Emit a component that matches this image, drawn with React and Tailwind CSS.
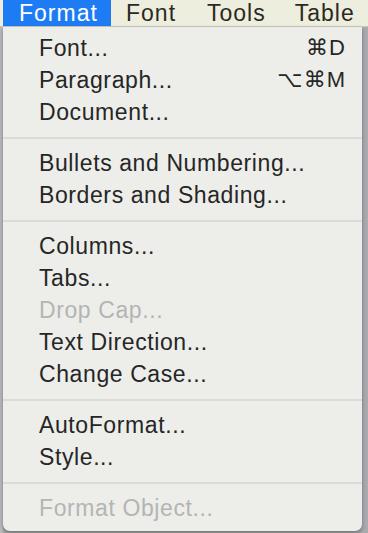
import React from "react";

const sections = [
  [
    { label: "Font...", shortcut: "⌘D" },
    { label: "Paragraph...", shortcut: "⌥⌘M" },
    { label: "Document..." },
  ],
  [{ label: "Bullets and Numbering..." }, { label: "Borders and Shading..." }],
  [
    { label: "Columns..." },
    { label: "Tabs..." },
    { label: "Drop Cap...", disabled: true },
    { label: "Text Direction..." },
    { label: "Change Case..." },
  ],
  [{ label: "AutoFormat..." }, { label: "Style..." }],
  [{ label: "Format Object...", disabled: true }],
];

const MenuItem = ({ label, shortcut, disabled }) => (
  <div
    className={`flex items-center justify-between h-[32px] pl-[36px] pr-[16px] ${
      disabled ? "text-[#b4b5b3]" : "text-[#262626]"
    }`}
  >
    <span className="tracking-[0.6px]">{label}</span>
    {shortcut && (
      <span className="text-[22px] font-['Liberation_Sans','DejaVu_Sans',sans-serif] tracking-[1px]">
        {shortcut}
      </span>
    )}
  </div>
);

const App = () => {
  return (
    <div className="w-[368px] h-[533px] bg-[#a9abae] overflow-hidden font-['Liberation_Sans',Arial,sans-serif] flex flex-col">
      <div className="flex h-[27px] bg-[#eeeedf] text-[23px] leading-[26px] text-[#2a2a22] border-b border-[#c9c9c0] tracking-[1px]">
        <div className="w-[3px] bg-[#eeeedf]" />
        <div className="w-[108px] bg-[#1d7cf4] text-white pl-[16px]">Format</div>
        <div className="pl-[15px]">Font</div>
        <div className="pl-[31px]">Tools</div>
        <div className="pl-[29px]">Table</div>
      </div>
      <div className="flex flex-1">
        <div className="w-[3px] bg-[#b9bbbe]" />
        <div className="w-[359px] h-[504px] bg-[#edeeea] rounded-b-[7px] shadow-[0_2px_4px_rgba(0,0,0,0.35)] pt-[5px] text-[23px] leading-none">
          {sections.map((items, i) => (
            <div key={i}>
              {i > 0 && (
                <div className="h-[19px] flex items-center">
                  <div className="w-full h-[2px] bg-[#dadbd8]" />
                </div>
              )}
              {items.map((item) => (
                <MenuItem key={item.label} {...item} />
              ))}
            </div>
          ))}
        </div>
      </div>
    </div>
  );
};

export default App;
